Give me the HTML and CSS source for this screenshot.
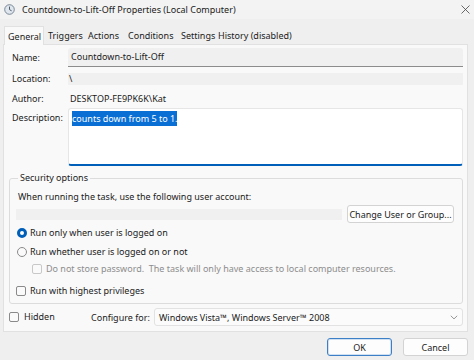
FILE: index.html
```html
<!DOCTYPE html>
<html lang="en">
<head>
    <meta charset="UTF-8">
    <meta name="viewport" content="width=device-width, initial-scale=1.0">
    <title>Countdown-to-Lift-Off Properties</title>
    <link rel="stylesheet" href="styles.css">
</head>
<body>
    <div class="window">
        <div class="titlebar">
            <svg class="app-icon" width="11" height="11" viewBox="0 0 11 11">
                <circle cx="5.5" cy="5.5" r="4.8" fill="#dfe6ee" stroke="#6f7d8c" stroke-width="0.9"/>
                <path d="M5.5 2.6 V5.6 L7.6 6.8" fill="none" stroke="#3d4a58" stroke-width="0.9"/>
            </svg>
            <span class="title">Countdown-to-Lift-Off Properties (Local Computer)</span>
            <svg class="close" width="9" height="9" viewBox="0 0 9 9">
                <path d="M0.5 0.5 L8.5 8.5 M8.5 0.5 L0.5 8.5" stroke="#444" stroke-width="0.8"/>
            </svg>
        </div>

        <div class="tabs">
            <div class="tab active">General</div>
            <div class="tab t-triggers">Triggers</div>
            <div class="tab t-actions">Actions</div>
            <div class="tab t-conditions">Conditions</div>
            <div class="tab t-settings">Settings</div>
            <div class="tab">History (disabled)</div>
        </div>

        <div class="panel">
            <div class="field-row row-name">
                <label>Name:</label>
                <div class="input">Countdown-to-Lift-Off</div>
            </div>
            <div class="field-row row-location">
                <label>Location:</label>
                <div class="input">\</div>
            </div>
            <div class="field-row row-author">
                <label>Author:</label>
                <div class="plain">DESKTOP-FE9PK6K\Kat</div>
            </div>
            <div class="field-row row-desc">
                <label>Description:</label>
                <div class="textarea"><span class="selected">counts down from 5 to 1.</span></div>
            </div>

            <fieldset class="security">
                <legend>Security options</legend>
                <div class="sec-text">When running the task, use the following user account:</div>
                <div class="account-row">
                    <div class="account-field"></div>
                    <button class="btn">Change User or Group...</button>
                </div>
                <div class="option radio-row first">
                    <span class="radio checked"></span>
                    <span>Run only when user is logged on</span>
                </div>
                <div class="option radio-row">
                    <span class="radio"></span>
                    <span>Run whether user is logged on or not</span>
                </div>
                <div class="option sub-option disabled">
                    <span class="checkbox"></span>
                    <span>Do not store password.&nbsp; The task will only have access to local computer resources.</span>
                </div>
                <div class="option priv-row">
                    <span class="checkbox"></span>
                    <span>Run with highest privileges</span>
                </div>
            </fieldset>

            <div class="bottom-row">
                <div class="option hidden-opt">
                    <span class="checkbox"></span>
                    <span>Hidden</span>
                </div>
                <span class="configure-label">Configure for:</span>
                <div class="select">
                    <span>Windows Vista™, Windows Server™ 2008</span>
                    <svg width="8" height="5" viewBox="0 0 8 5">
                        <path d="M0.8 0.8 L4 3.9 L7.2 0.8" fill="none" stroke="#8a8a8a" stroke-width="0.9"/>
                    </svg>
                </div>
            </div>
        </div>

        <div class="dialog-buttons">
            <button class="btn dlg ok">OK</button>
            <button class="btn dlg">Cancel</button>
        </div>
    </div>
</body>
</html>
```

FILE: styles.css
```css
* {
    box-sizing: border-box;
}
body {
    margin: 0;
    font-family: 'Noto Sans', 'Open Sans', sans-serif;
    font-size: 9px;
    color: #1b1b1b;
    background: #efefef;
}
.window {
    width: 474px;
    height: 360px;
    background: #efefef;
    overflow: hidden;
}
.titlebar {
    height: 19px;
    display: flex;
    align-items: center;
    padding: 0 4px;
    background: #f3f3f3;
}
.app-icon {
    margin-right: 7px;
}
.title {
    flex: 1;
    font-size: 9px;
}
.close {
    margin-right: 0;
}
.tabs {
    display: flex;
    align-items: flex-end;
    height: 25px;
    padding-left: 4px;
    white-space: nowrap;
}
.tab {
    height: 17px;
    line-height: 17px;
    padding-left: 4px;
    width: 40px;
}
.t-conditions {
    width: 53px;
}
.t-settings {
    width: 37px;
}
.tab:last-child {
    width: auto;
}
.tab.active {
    height: 19px;
    line-height: 19px;
    padding-left: 3px;
    background: #f9f9f9;
    border: 1px solid #e1e1e1;
    border-bottom: none;
    margin-bottom: -1px;
    position: relative;
}
.panel {
    margin: 0 6px 0 3px;
    height: 288px;
    border: 1px solid #e1e1e1;
    background: #f9f9f9;
    padding-top: 3px;
}
.field-row {
    display: grid;
    grid-template-columns: 56px 1fr;
    align-items: center;
    padding-left: 8px;
    margin-right: 4px;
}
.input {
    background: #f0f0f0;
    padding-left: 3px;
}
.row-name .input {
    height: 19px;
    line-height: 18px;
    border-bottom: 1px solid #8c8c8c;
    border-radius: 3px 3px 0 0;
}
.row-location {
    margin-top: 5px;
}
.row-location .input {
    height: 12px;
    line-height: 11px;
    padding-left: 1px;
}
.row-author {
    margin-top: 4px;
    height: 18px;
}
.plain {
    padding-left: 2px;
}
.row-desc {
    margin-top: 1px;
    align-items: start;
}
.row-desc label {
    margin-top: 3px;
}
.textarea {
    height: 58px;
    background: #fff;
    border: 1px solid #e6e6e6;
    border-bottom: 2px solid #005fb8;
    border-radius: 3px;
    padding: 3px 0 0 3px;
}
.selected {
    background: #0a6fd4;
    color: #fff;
    padding: 1px 0;
}
.security {
    margin: 5px 5px 0 5px;
    padding: 0 8px 0 6px;
    border: 1px solid #dcdcdc;
    border-radius: 3px;
    height: 133px;
}
.security legend {
    padding: 0 2px;
    margin-left: 2px;
    line-height: 14px;
}
.sec-text {
    margin-top: 5px;
    line-height: 14px;
    padding-left: 2px;
    white-space: nowrap;
}
.account-row {
    display: flex;
    align-items: center;
    height: 18px;
    margin-top: 1px;
}
.account-field {
    height: 11px;
    width: 326px;
    background: #f0f0f0;
}
.btn {
    font-family: inherit;
    font-size: 9px;
    color: #1b1b1b;
    background: #fdfdfd;
    border: 1px solid #d3d3d3;
    border-radius: 3px;
    padding: 0;
    white-space: nowrap;
}
.account-row .btn {
    margin-left: 5px;
    width: 107px;
    height: 18px;
}
.option {
    display: flex;
    align-items: center;
    gap: 4px;
    height: 14px;
    line-height: 14px;
    white-space: nowrap;
}
.radio-row {
    margin-top: 5px;
    padding-left: 1px;
    gap: 3px;
}
.radio-row.first {
    margin-top: 3px;
}
.radio {
    width: 10px;
    height: 10px;
    border-radius: 50%;
    border: 1px solid #8a8a8a;
    background: #fafafa;
    flex: none;
}
.radio.checked {
    border: 3px solid #005fb8;
    background: #fff;
}
.checkbox {
    width: 10px;
    height: 10px;
    border: 1px solid #8a8a8a;
    border-radius: 2px;
    background: #fafafa;
    flex: none;
}
.sub-option {
    margin-top: 3px;
    padding-left: 16px;
}
.disabled {
    color: #8d8d8d;
}
.disabled .checkbox {
    border-color: #c8c8c8;
}
.priv-row {
    margin-top: 8px;
}
.bottom-row {
    display: flex;
    align-items: center;
    height: 18px;
    margin-top: 4px;
    padding-left: 5px;
    padding-right: 4px;
    white-space: nowrap;
}
.hidden-opt {
    width: 82px;
    gap: 5px;
}
.configure-label {
    width: 63px;
}
.select {
    flex: 1;
    height: 18px;
    display: flex;
    align-items: center;
    justify-content: space-between;
    padding: 0 4px;
    background: #fbfbfb;
    border: 1px solid #e2e2e2;
    border-radius: 3px;
}
.dialog-buttons {
    display: flex;
    justify-content: flex-end;
    gap: 11px;
    padding: 6px 6px 0 0;
}
.btn.dlg {
    width: 65px;
    height: 18px;
}
.btn.ok {
    border: 1px solid #3d7fc6;
    box-shadow: inset 0 0 0 1px #cfe0f3;
}
```
